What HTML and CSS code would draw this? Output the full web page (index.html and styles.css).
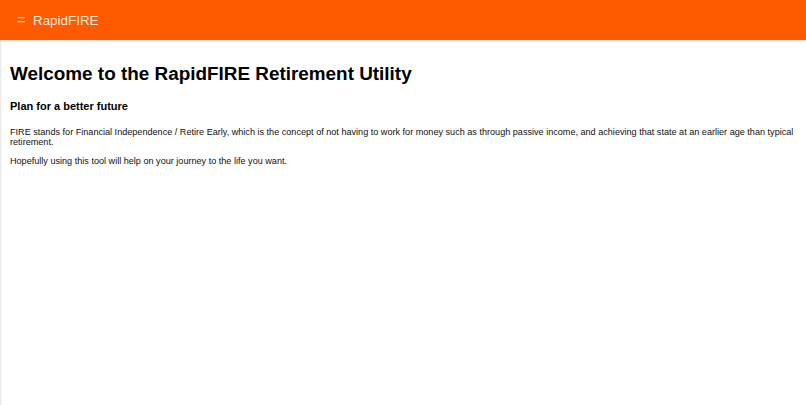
FILE: index.html
```html
<!DOCTYPE html>
<html>
<head>
<meta charset="utf-8">
<link rel="stylesheet" href="styles.css">
</head>
<body>
<header class="appbar">
  <span class="menu">=</span>
  <span class="title">RapidFIRE</span>
</header>
<main class="content">
  <h1 class="welcome">Welcome to the RapidFIRE Retirement Utility</h1>
  <h3 class="sub">Plan for a better future</h3>
  <p class="para">FIRE stands for Financial Independence / Retire Early, which is the concept of not having to work for money such as through passive income, and achieving that state at an earlier age than typical retirement.</p>
  <p class="para">Hopefully using this tool will help on your journey to the life you want.</p>
</main>
</body>
</html>
```
FILE: styles.css
```css
html, body {
  margin: 0;
  padding: 0;
  background: #ffffff;
  font-family: "Liberation Sans", Arial, sans-serif;
  color: #000;
}
body {
  min-height: 405px;
  box-shadow: inset 2px 0 2px -1px rgba(0,0,0,0.12);
}
.appbar {
  height: 40px;
  background: #ff5a00;
  display: flex;
  align-items: center;
  padding-left: 17px;
  color: #fde8d8;
  box-shadow: 0 1px 2px rgba(0,0,0,0.12);
}
.menu {
  font-size: 14px;
  width: 16px;
}
.title {
  font-size: 13.4px;
}
.content {
  padding: 0 8px 0 10px;
}
.welcome {
  font-size: 18.9px;
  font-weight: bold;
  margin: 22px 0 0 0;
  line-height: 24px;
}
.sub {
  font-size: 11px;
  font-weight: bold;
  margin: 12px 0 0 0;
  line-height: 16px;
}
.para {
  font-size: 9.1px;
  line-height: 10px;
  margin: 13px 0 0 0;
  color: #111;
}
.para + .para {
  margin-top: 9px;
}
```
